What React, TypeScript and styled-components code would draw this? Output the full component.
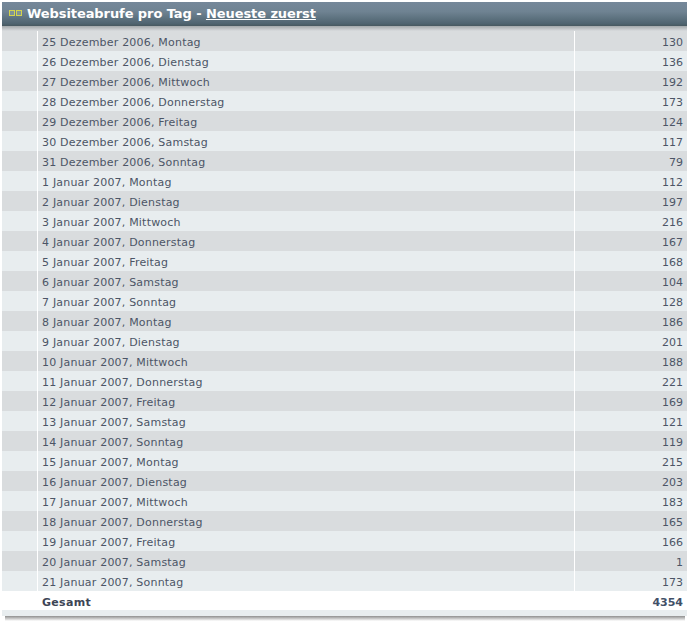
import React from "react";
import styled, { createGlobalStyle } from "styled-components";

const Global = createGlobalStyle`
  html, body { margin: 0; padding: 0; background: #fff; }
  body { font-family: "DejaVu Sans", Verdana, sans-serif; }
`;

const Panel = styled.div`
  width: 685px;
  margin: 2px 0 0 2px;
  display: flex;
  flex-direction: column;
`;

const Header = styled.div`
  height: 24px;
  display: flex;
  align-items: center;
  gap: 5px;
  padding: 0 0 2px 7px;
  background: linear-gradient(#75889a 0%, #6f8392 40%, #4f6470 90%, #47585f 100%);
  color: #fff;
  font-size: 13px;
  font-weight: bold;
  letter-spacing: -0.08px;
  box-sizing: border-box;
`;

const HeaderLink = styled.a`
  color: #fff;
  text-decoration: underline;
`;

const HeaderShadow = styled.div`
  height: 5px;
  background: linear-gradient(#a3a8ab, #d9dcde);
`;

const Row = styled.div<{ $shade: boolean }>`
  height: 20px;
  box-sizing: border-box;
  display: grid;
  grid-template-columns: 35px 538px 1fr;
  font-size: 11px;
  line-height: 20px;
  color: #4c5566;
  background: ${(p) => (p.$shade ? "#d9dcde" : "#e8edef")};
`;

const Spacer = styled.div``;

const DateCell = styled.div`
  border-left: 1px solid #fff;
  border-right: 1px solid #fff;
  padding: 2px 0 0 4px;
  line-height: 20px;
  letter-spacing: 0.2px;
  box-sizing: border-box;
  white-space: nowrap;
  height: 20px;
`;

const ValueCell = styled.div`
  text-align: right;
  padding: 2px 4px 0 0;
  height: 20px;
  box-sizing: border-box;
`;

const TotalRow = styled.div`
  height: 19px;
  box-sizing: border-box;
  display: flex;
  justify-content: space-between;
  padding: 3px 4px 0 40px;
  font-size: 11px;
  font-weight: bold;
  line-height: 18px;
  color: #3c4555;
  background: #fff;
`;

const TotalLabel = styled.span`
  letter-spacing: 0.3px;
`;

const TotalValue = styled.span`
  color: #415068;
`;

const FootBar = styled.div`
  height: 6px;
  background: #e8edef;
`;

const FootShadow = styled.div`
  height: 5px;
  margin: 0 2px 0 3px;
  background: linear-gradient(#8f8f8f, #ffffff);
`;

const Marks = () => (
  <svg width="13" height="6" viewBox="0 0 13 6" style={{ flex: "none" }}>
    <rect x="0.5" y="0.5" width="5" height="5" fill="#7f9297" stroke="#d4d44e" />
    <rect x="7.5" y="0.5" width="5" height="5" fill="#7f9297" stroke="#d4d44e" />
  </svg>
);

const rows: [string, number][] = [
  ["25 Dezember 2006, Montag", 130],
  ["26 Dezember 2006, Dienstag", 136],
  ["27 Dezember 2006, Mittwoch", 192],
  ["28 Dezember 2006, Donnerstag", 173],
  ["29 Dezember 2006, Freitag", 124],
  ["30 Dezember 2006, Samstag", 117],
  ["31 Dezember 2006, Sonntag", 79],
  ["1 Januar 2007, Montag", 112],
  ["2 Januar 2007, Dienstag", 197],
  ["3 Januar 2007, Mittwoch", 216],
  ["4 Januar 2007, Donnerstag", 167],
  ["5 Januar 2007, Freitag", 168],
  ["6 Januar 2007, Samstag", 104],
  ["7 Januar 2007, Sonntag", 128],
  ["8 Januar 2007, Montag", 186],
  ["9 Januar 2007, Dienstag", 201],
  ["10 Januar 2007, Mittwoch", 188],
  ["11 Januar 2007, Donnerstag", 221],
  ["12 Januar 2007, Freitag", 169],
  ["13 Januar 2007, Samstag", 121],
  ["14 Januar 2007, Sonntag", 119],
  ["15 Januar 2007, Montag", 215],
  ["16 Januar 2007, Dienstag", 203],
  ["17 Januar 2007, Mittwoch", 183],
  ["18 Januar 2007, Donnerstag", 165],
  ["19 Januar 2007, Freitag", 166],
  ["20 Januar 2007, Samstag", 1],
  ["21 Januar 2007, Sonntag", 173],
];

export default function App() {
  return (
    <>
      <Global />
      <Panel>
        <Header>
          <Marks />
          <span>
            Websiteabrufe pro Tag - <HeaderLink>Neueste zuerst</HeaderLink>
          </span>
        </Header>
        <HeaderShadow />
        {rows.map(([d, v], i) => (
          <Row key={d} $shade={i % 2 === 0}>
            <Spacer />
            <DateCell>{d}</DateCell>
            <ValueCell>{v}</ValueCell>
          </Row>
        ))}
        <TotalRow>
          <TotalLabel>Gesamt</TotalLabel>
          <TotalValue>4354</TotalValue>
        </TotalRow>
        <FootBar />
        <FootShadow />
      </Panel>
    </>
  );
}
